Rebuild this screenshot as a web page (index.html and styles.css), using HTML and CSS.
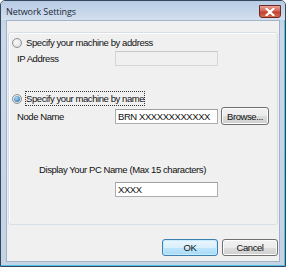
FILE: index.html
```html
<!DOCTYPE html>
<html lang="en">
<head>
    <meta charset="UTF-8">
    <title>Network Settings</title>
    <link rel="stylesheet" href="styles.css">
</head>
<body>
    <div class="window">
        <div class="titlebar">
            <span class="title">Network Settings</span>
            <span class="close">
                <svg width="10" height="8" viewBox="0 0 10 8">
                    <path d="M1.5 0.8 L8.5 7.2 M8.5 0.8 L1.5 7.2" stroke="#fff" stroke-width="2.2" stroke-linecap="round"/>
                </svg>
            </span>
        </div>

        <div class="client">
            <div class="group">
                <div class="radio-row">
                    <span class="radio"></span>
                    <span class="radio-text">Specify your machine by address</span>
                </div>
                <div class="field-row ip-row">
                    <span class="label">IP Address</span>
                    <span class="input disabled"></span>
                </div>

                <div class="radio-row name-radio">
                    <span class="radio checked"></span>
                    <span class="radio-text focused">Specify your machine by name</span>
                </div>
                <div class="field-row node-row">
                    <span class="label">Node Name</span>
                    <span class="input">BRN XXXXXXXXXXXX</span>
                    <span class="button browse">Browse...</span>
                </div>

                <div class="pc-label">Display Your PC Name (Max 15 characters)</div>
                <div class="field-row pc-row">
                    <span class="input">XXXX</span>
                </div>
            </div>

            <div class="buttons">
                <span class="button default">OK</span>
                <span class="button">Cancel</span>
            </div>
        </div>
    </div>
</body>
</html>
```

FILE: styles.css
```css
body {
    margin: 0;
    font-family: "Liberation Sans", Arial, sans-serif;
    font-size: 9.5px;
    letter-spacing: -0.42px;
    color: #111;
}
.window {
    width: 286px;
    height: 267px;
    box-sizing: border-box;
    border: 1px solid #34475c;
    border-radius: 5px 5px 0 0;
    background: linear-gradient(#bccee4, #c9d8ea 30px, #c4d4e6);
    box-shadow: inset -1px -1px 0 #4ec3e6;
    display: flex;
    flex-direction: column;
}
.titlebar {
    height: 19px;
    display: flex;
    align-items: center;
    justify-content: space-between;
    padding: 0 4px 0 5px;
    background: linear-gradient(#b6cbe3, #d3e0ef);
    border-radius: 4px 4px 0 0;
}
.title {
    font-family: "Open Sans", sans-serif;
    font-size: 9px;
    letter-spacing: -0.1px;
    color: #1d2a38;
    padding-top: 1px;
}
.close {
    width: 22px;
    height: 13px;
    margin-top: 2px;
    box-sizing: border-box;
    border: 1px solid #6d2a26;
    border-radius: 0 0 3px 3px;
    background: linear-gradient(#e8a293, #d1655a 45%, #c2412f 55%, #d96a52);
    display: flex;
    align-items: center;
    justify-content: center;
}
.client {
    flex: 1;
    margin: 0 5px 4px 5px;
    background: #f0f0f0;
    border: 1px solid #a3b3c7;
    display: flex;
    flex-direction: column;
}
.group {
    height: 193px;
    box-sizing: border-box;
    margin: 11px 1px 0 1px;
    padding-top: 3px;
    border: 1px solid #d5dfe5;
    border-radius: 3px;
    box-shadow: inset 1px 1px 0 #fff;
}
.radio-row {
    height: 13px;
    display: flex;
    align-items: center;
    padding-left: 3px;
}
.radio {
    width: 10px;
    height: 10px;
    box-sizing: border-box;
    border: 1px solid #8e8f8f;
    border-radius: 50%;
    background: radial-gradient(circle at 40% 40%, #fbfbfb, #d6d6d6);
    margin-right: 3px;
    position: relative;
}
.radio.checked::after {
    content: "";
    position: absolute;
    left: 1px;
    top: 1px;
    width: 6px;
    height: 6px;
    border-radius: 50%;
    background: radial-gradient(circle at 40% 35%, #a6ddf7, #1d5fa6);
}
.radio-text {
    padding: 1px 0;
    border: 1px dotted transparent;
    white-space: nowrap;
}
.radio-text.focused {
    border-color: #333;
}
.field-row {
    display: flex;
    align-items: center;
}
.label {
    width: 98px;
    padding-left: 8px;
    white-space: nowrap;
}
.input {
    width: 103px;
    height: 15px;
    box-sizing: border-box;
    border: 1px solid #abadb3;
    border-top-color: #a0a0a0;
    background: #fff;
    padding-left: 2px;
    line-height: 13px;
    white-space: nowrap;
    overflow: hidden;
}
.input.disabled {
    background: #f0f0f0;
    border-color: #d6d6d6;
    border-top-color: #c8c8c8;
}
.ip-row {
    margin-top: 2px;
}
.name-radio {
    margin-top: 26px;
}
.node-row {
    margin-top: 2px;
    height: 18px;
}
.button {
    height: 17px;
    box-sizing: border-box;
    border: 1px solid #707070;
    border-radius: 3px;
    background: linear-gradient(#f2f2f2, #ebebeb 50%, #dddddd 51%, #cfcfcf);
    display: flex;
    align-items: center;
    justify-content: center;
    box-shadow: inset 0 0 0 1px #fcfcfc;
}
.browse {
    width: 48px;
    height: 18px;
    margin-left: 3px;
}
.pc-label {
    margin-top: 38px;
    padding-left: 30px;
    height: 13px;
    line-height: 13px;
}
.pc-row {
    margin-top: 6px;
    padding-left: 106px;
}
.buttons {
    display: flex;
    justify-content: flex-end;
    gap: 4px;
    margin: 14px 1px 0 0;
}
.buttons .button {
    width: 56px;
}
.button.default {
    border-color: #3c7fb1;
    background: linear-gradient(#eaf6fd, #d9f0fc 50%, #bee6fd 51%, #a7d9f5);
    box-shadow: inset 0 0 0 1px #c8ecff;
}
```
